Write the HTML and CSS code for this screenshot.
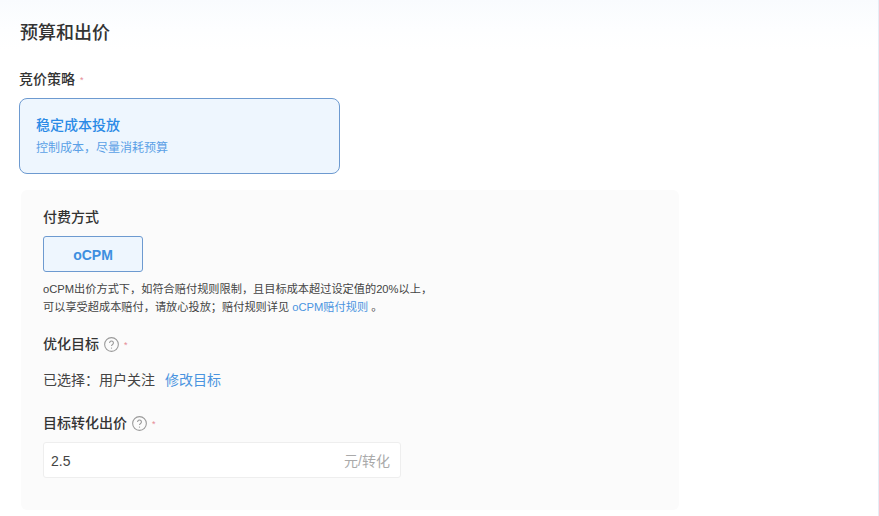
FILE: index.html
```html
<!DOCTYPE html>
<html lang="zh-CN">
<head>
<meta charset="utf-8">
<title>预算和出价</title>
<link rel="stylesheet" href="styles.css">
</head>
<body>
<main class="page">
  <h2 class="title">预算和出价</h2>
  <div class="label strategy-label">竞价策略<span class="req">*</span></div>
  <div class="card">
    <div class="card-title">稳定成本投放</div>
    <div class="card-sub">控制成本，尽量消耗预算</div>
  </div>
  <section class="panel">
    <div class="label">付费方式</div>
    <div class="pay-btn">oCPM</div>
    <p class="note">oCPM出价方式下，如符合赔付规则限制，且目标成本超过设定值的20%以上，<br>可以享受超成本赔付，请放心投放；赔付规则详见 <a class="link">oCPM赔付规则</a> 。</p>
    <div class="label with-icon goal-label">优化目标
      <svg class="help" viewBox="0 0 14 14"><circle cx="7" cy="7" r="6.4"/><path d="M5.2 5.5a1.8 1.8 0 1 1 2.8 1.5c-.7.45-1 .8-1 1.5"/><circle class="dot" cx="7" cy="10.3" r=".6"/></svg>
      <span class="req">*</span></div>
    <div class="selected"><span>已选择：用户关注</span><a class="link">修改目标</a></div>
    <div class="label with-icon bid-label">目标转化出价
      <svg class="help" viewBox="0 0 14 14"><circle cx="7" cy="7" r="6.4"/><path d="M5.2 5.5a1.8 1.8 0 1 1 2.8 1.5c-.7.45-1 .8-1 1.5"/><circle class="dot" cx="7" cy="10.3" r=".6"/></svg>
      <span class="req">*</span></div>
    <div class="input"><span class="value">2.5</span><span class="unit">元/转化</span></div>
  </section>
</main>
</body>
</html>
```
FILE: styles.css
```css
* { box-sizing: border-box; }
html, body { margin: 0; height: 516px; overflow: hidden; background: #fff; }
body {
  font-family: "Liberation Sans", "Noto Sans CJK SC", sans-serif;
  color: #333;
  border-right: 1px solid #e6ecf5;
  background: linear-gradient(#f9fbfe 0, #fdfeff 30px, #fff 50px);
}
.page { padding: 21px 0 0 19px; }
.title { margin: 0; font-size: 18px; line-height: 24px; font-weight: 500; color: #333; padding-left: 1px; }
.label { font-size: 14px; line-height: 20px; font-weight: 500; color: #333; }
.strategy-label { margin-top: 24px; display: flex; align-items: center; }
.req { color: #e58a94; font-size: 9px; font-weight: 400; margin-left: 5px; line-height: 1; padding-top: 3px; }
.card {
  margin-top: 9px; width: 321px; height: 76px; padding: 16px 16px 0;
  background: #eef6fe; border: 1px solid #6d9ad0; border-radius: 8px;
}
.card-title { font-size: 14px; line-height: 20px; font-weight: 500; color: #2a8ae6; }
.card-sub { margin-top: 4px; font-size: 12px; line-height: 18px; color: #5aa0e6; }
.panel {
  margin: 16px 0 0 2px; width: 658px; height: 320px; padding: 17px 22px 0;
  background: #fbfbfb; border-radius: 6px;
}
.pay-btn {
  margin-top: 9px; width: 100px; height: 36px; padding-top: 2px; display: flex; align-items: center; justify-content: center;
  font-size: 14px; font-weight: 700; color: #3d8fe0;
  background: #eef6fe; border: 1px solid #6d9ad0; border-radius: 3px;
}
.note { margin: 8px 0 0; font-size: 11.2px; line-height: 18px; color: #444; }
.link { color: #4a94e0; }
.with-icon { display: flex; align-items: center; }
.goal-label { margin-top: 18px; }
.bid-label { margin-top: 23px; }
.help { width: 15px; height: 15px; margin-left: 5px; fill: none; stroke: #999; stroke-width: 1; }
.help .dot { fill: #999; stroke: none; }
.selected { margin-top: 16px; font-size: 14px; line-height: 20px; color: #444; display: flex; gap: 10px; }
.input {
  margin-top: 9px; width: 358px; height: 36px; padding: 0 10px 0 7px;
  display: flex; align-items: center; justify-content: space-between;
  background: #fff; border: 1px solid #eeeeee; border-radius: 3px; font-size: 14px;
}
.value { color: #444; padding-top: 2px; }
.unit { color: #aaa; }
```
